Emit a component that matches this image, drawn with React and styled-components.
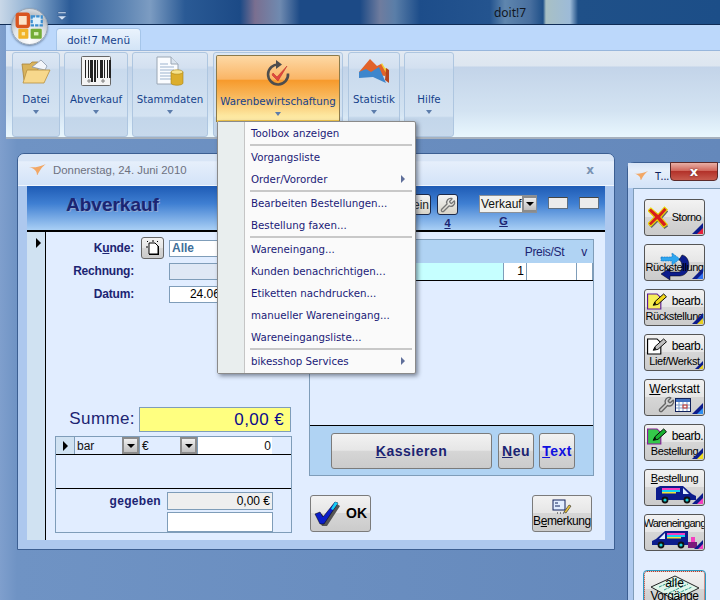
import React from "react";
import styled, { createGlobalStyle } from "styled-components";
import { Wrench } from "lucide-react";

const GlobalStyle = createGlobalStyle`
  html, body {
    margin: 0;
    padding: 0;
    background: #6488bb;
  }
  * {
    box-sizing: border-box;
  }
`;

const NAVY = "#1c2472";
const FIELD_BORDER = "#7f9db9";
const FACE = "linear-gradient(#f2f2f2 0%, #e6e6e6 48%, #d6d6d6 50%, #cbcbcb 100%)";

const Root = styled.div`
  width: 720px;
  height: 600px;
  overflow: hidden;
  display: flex;
  flex-direction: column;
  font-family: "Liberation Sans", Arial, sans-serif;
  background: linear-gradient(90deg, #7f9fcd 0, #6f93c4 17px, #6488bb 100%);
  position: relative;
`;

const TitleBar = styled.div`
  height: 25px;
  flex: none;
  display: flex;
  justify-content: center;
  align-items: center;
  padding-left: 300px;
  font-family: "Noto Sans", sans-serif;
  font-size: 12px;
  color: #10161f;
  border-bottom: 1px solid #0f2c55;
  background: linear-gradient(
    90deg,
    #c9d8e8 0,
    #8fb0d2 30px,
    #2c5c98 70px,
    #5f86b4 125px,
    #7c9cc2 150px,
    #2a5a95 185px,
    #1c4a86 240px,
    #7a6f90 255px,
    #6f8ab0 280px,
    #1c4a86 300px,
    #1c4a86 360px,
    #6f7c9e 380px,
    #5a7ea8 395px,
    #1d4d8a 420px,
    #24548f 490px,
    #5f86ae 505px,
    #486f9f 530px,
    #1f5088 543px,
    #a8c0c4 546px,
    #9dbbd8 570px,
    #1f5088 578px,
    #1c4e88 100%
  );
`;

const OfficeButton = styled.div`
  position: absolute;
  left: 11px;
  top: 8px;
  width: 37px;
  height: 37px;
  border-radius: 50%;
  border: 1px solid #9aa6b4;
  background: radial-gradient(circle at 50% 90%, #ffffff 0, #e2e6ea 45%, #b7bdc4 70%, #f3f5f7 100%);
  display: flex;
  align-items: center;
  justify-content: center;
  box-shadow: 0 1px 2px rgba(30, 50, 80, 0.5);
`;

const QuickArrow = styled.svg`
  position: absolute;
  left: 57px;
  top: 11px;
`;

const TabStrip = styled.div`
  height: 25px;
  flex: none;
  background: #bcd8fb;
  padding: 3px 0 0 50px;
  margin-left: 6px;
`;

const Tab = styled.div`
  width: 85px;
  height: 22px;
  border: 1px solid #a5c5e9;
  border-bottom: none;
  border-radius: 4px 4px 0 0;
  background: linear-gradient(#eaf3fd, #d3e4f6);
  display: flex;
  align-items: center;
  justify-content: center;
  font-family: "DejaVu Sans", sans-serif;
  font-size: 10.5px;
  color: #15428b;
`;

const RibbonPanel = styled.div`
  height: 89px;
  flex: none;
  margin-left: 6px;
  padding: 1px 0 0 6px;
  display: flex;
  border-top: 1px solid #98b6dc;
  border-bottom: 2px solid #a7b1bd;
  background: linear-gradient(
    #e2e9f2 0,
    #dde6f0 17%,
    #c3d4e9 19%,
    #d3e3f2 70%,
    #e9f7fe 100%
  );
`;

const RibbonGroup = styled.div`
  width: ${(p) => p.$w}px;
  height: 85px;
  flex: none;
  margin-right: ${(p) => p.$gap ?? 4}px;
  border: 1px solid #aec6e0;
  border-radius: 3px;
  padding-top: 2px;
  display: flex;
  flex-direction: column;
  align-items: center;
  background: linear-gradient(
    #dce7f4 0,
    #d3e0f0 18%,
    #c9daed 20%,
    #d4e3f2 76%,
    #c3d6ea 78%,
    #c7d9ec 100%
  );
`;

const HotButton = styled.div`
  width: 124px;
  height: 67px;
  border: 1px solid #8b7a4a;
  border-bottom: none;
  border-radius: 2px 2px 0 0;
  padding-top: 1px;
  display: flex;
  flex-direction: column;
  align-items: center;
  background: linear-gradient(#fdd9a5 0, #fab566 35%, #f79a2c 37%, #f8b95e 62%, #fde79f 90%, #fdeaa8 100%);
  box-shadow: inset 0 -2px 0 #f6c94c;
`;

const RibbonIcon = styled.div`
  height: 32px;
  flex: none;
  display: flex;
  align-items: center;
  justify-content: center;
`;

const RibbonLabel = styled.div`
  margin-top: 6px;
  font-family: "DejaVu Sans", sans-serif;
  font-size: 10.25px;
  line-height: 13px;
  color: #15428b;
  white-space: nowrap;
`;

const DownArrow = styled.div`
  margin-top: 4px;
  width: 0;
  height: 0;
  border-left: 3.5px solid transparent;
  border-right: 3.5px solid transparent;
  border-top: 4px solid #5b7cab;
`;

const Menu = styled.div`
  position: absolute;
  left: 217px;
  top: 121px;
  width: 199px;
  height: 253px;
  border: 1px solid #8a8a8a;
  border-radius: 2px;
  background: #fafafa;
  box-shadow: 2px 2px 4px rgba(40, 50, 70, 0.55);
  padding: 0 3px 1px 26px;
  display: flex;
  flex-direction: column;
  &::before {
    content: "";
    position: absolute;
    left: 0;
    top: 0;
    bottom: 0;
    width: 26px;
    background: #e9eeee;
    border-right: 1px solid #c5c5c5;
  }
`;

const MenuItem = styled.div`
  height: 22px;
  flex: none;
  display: flex;
  align-items: center;
  justify-content: space-between;
  padding: 0 7px 0 7px;
  font-family: "DejaVu Sans", sans-serif;
  font-size: 10.25px;
  color: #1a1a78;
  white-space: nowrap;
`;

const MenuRule = styled.div`
  height: 2px;
  flex: none;
  margin: 0 0 0 6px;
  background: #c8c8c8;
`;

const SubArrow = styled.span`
  width: 0;
  height: 0;
  border-top: 4px solid transparent;
  border-bottom: 4px solid transparent;
  border-left: 4px solid #5f6f9a;
`;

const Desktop = styled.div`
  flex: 1;
  display: flex;
  align-items: flex-start;
  padding: 14px 0 0 17px;
  min-height: 0;
`;

const Window = styled.div`
  width: 598px;
  height: 397px;
  flex: none;
  border: 1px solid #3c5f92;
  border-radius: 7px 7px 0 0;
  background: #adc8ee;
  display: flex;
  flex-direction: column;
  overflow: hidden;
`;

const WindowTitle = styled.div`
  height: 32px;
  flex: none;
  display: flex;
  align-items: center;
  padding: 0 20px 0 11px;
  gap: 6px;
  font-size: 11.4px;
  color: #6d7180;
  background: linear-gradient(#d8e5f6 0, #d8e5f6 22%, #e6effb 25%, #d3e3f8 100%);
  border-bottom: 1px solid #f0f6fd;
`;

const CloseX = styled.span`
  margin-left: auto;
  font-family: "DejaVu Sans", sans-serif;
  font-weight: 700;
  font-size: 12px;
  color: #7a93b2;
`;

const WindowBody = styled.div`
  flex: 1;
  margin: 0 9px 9px 9px;
  display: flex;
  flex-direction: column;
  min-height: 0;
  background: #e1edff;
`;

const FormHeader = styled.div`
  height: 46px;
  flex: none;
  display: flex;
  align-items: flex-start;
  border-bottom: 2px solid #000;
  background: linear-gradient(#1e5bb5 0, #3f7fd2 40%, #a9cff5 100%);
`;

const FormTitle = styled.div`
  margin: 9px 0 0 39px;
  font-size: 19px;
  line-height: 20px;
  font-weight: 700;
  color: ${NAVY};
  text-shadow: 1px 1px 0 #8ea8cf;
`;

const HeaderTools = styled.div`
  margin-left: auto;
  display: flex;
  align-items: flex-start;
  padding: 8px 6px 0 0;
`;

const HeaderStack = styled.div`
  display: flex;
  flex-direction: column;
  align-items: center;
  width: ${(p) => p.$w}px;
  margin-right: ${(p) => p.$gap ?? 0}px;
`;

const HeaderKey = styled.u`
  font-size: 11px;
  line-height: 13px;
  margin-top: 2px;
  margin-right: ${(p) => p.$shift ?? 0}px;
  font-weight: 700;
  color: ${NAVY};
`;

const MiniButton = styled.div`
  width: ${(p) => p.$w}px;
  height: 21px;
  border: 1px solid #1d2a4a;
  border-radius: 3px;
  background: linear-gradient(#f4f4f4, #d8d4c8);
  display: flex;
  align-items: center;
  justify-content: flex-end;
  padding-right: 1px;
  font-size: 12px;
  color: #222;
`;

const ToolFace = styled(MiniButton)`
  justify-content: center;
  padding: 0;
  color: #8a8a8a;
`;

const Combo = styled.div`
  width: 58px;
  height: 18px;
  margin-top: 1px;
  border: 1px solid #8b9097;
  background: #f1f1ee;
  display: flex;
  align-items: center;
  font-size: 12px;
  padding-left: 1px;
  color: #111;
  overflow: hidden;
`;

const DropButton = styled.span`
  width: 17px;
  height: 100%;
  flex: none;
  margin-left: auto;
  border: 2px solid #8b8b8b;
  background: linear-gradient(#eeeeee, #bfbfbf);
  display: flex;
  align-items: center;
  justify-content: center;
  &::after {
    content: "";
    border-left: 4px solid transparent;
    border-right: 4px solid transparent;
    border-top: 4px solid #000;
  }
`;

const SmallBox = styled.div`
  width: 20px;
  height: 12px;
  margin: 3px 0 0 11px;
  border: 1px solid #5f6f80;
  border-top-color: #444;
  background: #ececec;
`;

const FormBody = styled.div`
  flex: 1;
  display: flex;
  min-height: 0;
`;

const Selector = styled.div`
  width: 19px;
  flex: none;
  padding: 6px 0 0 9px;
  background: #d0e2f2;
  border-right: 1px solid #000;
`;

const Triangle = styled.div`
  width: 0;
  height: 0;
  border-top: ${(p) => p.$s ?? 5}px solid transparent;
  border-bottom: ${(p) => p.$s ?? 5}px solid transparent;
  border-left: ${(p) => p.$s ?? 5}px solid #000;
`;

const LeftColumn = styled.div`
  width: 263px;
  flex: none;
  display: flex;
  flex-direction: column;
  padding-top: 5px;
`;

const FormRow = styled.div`
  display: flex;
  align-items: center;
  height: ${(p) => p.$h}px;
  margin-bottom: ${(p) => p.$mb ?? 0}px;
`;

const FormLabel = styled.div`
  width: 88px;
  flex: none;
  text-align: right;
  font-size: 12px;
  font-weight: 700;
  letter-spacing: -0.2px;
  color: ${NAVY};
`;

const Field = styled.div`
  width: ${(p) => p.$w}px;
  height: ${(p) => p.$h ?? 17}px;
  flex: none;
  margin-left: ${(p) => p.$ml ?? 0}px;
  border: 1px solid ${FIELD_BORDER};
  background: ${(p) => p.$bg ?? "#fff"};
  color: ${(p) => p.$color ?? "#000"};
  font-size: 12px;
  font-weight: ${(p) => (p.$bold ? 700 : 400)};
  line-height: ${(p) => (p.$h ?? 17) - 2}px;
  padding: 0 2px;
  text-align: ${(p) => p.$align ?? "left"};
  overflow: hidden;
  white-space: nowrap;
`;

const IconSquare = styled.div`
  width: 23px;
  height: 22px;
  margin-left: 7px;
  flex: none;
  border: 1px solid #666;
  border-radius: 3px;
  background: ${FACE};
  display: flex;
  align-items: center;
  justify-content: center;
`;

const SumRow = styled.div`
  margin-top: auto;
  display: flex;
  align-items: center;
  justify-content: flex-end;
  height: 26px;
  flex: none;
  padding-right: 18px;
`;

const SumLabel = styled.div`
  font-size: 17px;
  letter-spacing: 0.4px;
  color: ${NAVY};
  margin-right: 4px;
`;

const SumField = styled.div`
  width: 152px;
  height: 25px;
  border: 1px solid ${FIELD_BORDER};
  background: #ffff80;
  color: #0a0a8c;
  font-size: 17px;
  line-height: 23px;
  letter-spacing: 0.4px;
  text-align: right;
  padding-right: 6px;
`;

const PayBox = styled.div`
  width: 237px;
  height: 97px;
  flex: none;
  margin: 4px 0 7px 9px;
  border: 1px solid ${FIELD_BORDER};
  display: flex;
  flex-direction: column;
`;

const PayRow = styled.div`
  height: 17px;
  flex: none;
  display: flex;
  align-items: stretch;
  border-bottom: 1px solid #000;
  box-sizing: content-box;
  font-size: 11px;
`;

const PayMark = styled.div`
  width: 18px;
  background: #d0e2f2;
  display: flex;
  align-items: center;
  justify-content: center;
`;

const PayCell = styled.div`
  width: ${(p) => p.$w}px;
  display: flex;
  align-items: center;
  padding-left: 2px;
  border-left: 1px solid ${FIELD_BORDER};
  color: #111;
  background: ${(p) => p.$bg ?? "transparent"};
  justify-content: ${(p) => (p.$right ? "flex-end" : "flex-start")};
  padding-right: ${(p) => (p.$right ? 1 : 0)}px;
  font-size: 12px;
`;

const PaySpacer = styled.div`
  height: 33px;
  flex: none;
  border-bottom: 1px solid #000;
  box-sizing: content-box;
`;

const GivenGrid = styled.div`
  display: grid;
  grid-template-columns: 105px 106px;
  column-gap: 6px;
  row-gap: 2px;
  padding-top: 3px;
  align-items: center;
`;

const GivenLabel = styled.div`
  text-align: right;
  font-size: 12px;
  font-weight: 700;
  letter-spacing: 0.3px;
  color: ${NAVY};
`;

const RightColumn = styled.div`
  flex: 1;
  display: flex;
  flex-direction: column;
  padding: 7px 12px 7px 0;
`;

const SalesPanel = styled.div`
  height: 237px;
  flex: none;
  width: 285px;
  border: 1px solid ${FIELD_BORDER};
  display: flex;
  flex-direction: column;
`;

const GridHead = styled.div`
  height: 23px;
  flex: none;
  display: flex;
  align-items: center;
  justify-content: flex-end;
  padding-right: 6px;
  gap: 17px;
  background: #b0d3f3;
  font-size: 12px;
  letter-spacing: -0.3px;
  color: ${NAVY};
`;

const GridRow = styled.div`
  height: 17px;
  flex: none;
  display: flex;
  border-bottom: 1px solid #000;
  box-sizing: content-box;
`;

const GridCell = styled.div`
  width: ${(p) => p.$w}px;
  flex: ${(p) => (p.$w ? "none" : 1)};
  background: ${(p) => p.$bg ?? "#fff"};
  border-right: 1px solid ${FIELD_BORDER};
  font-size: 12px;
  text-align: right;
  padding-right: 2px;
  line-height: 16px;
`;

const GridFill = styled.div`
  flex: 1;
  border-bottom: 1px solid #000;
`;

const ActionBar = styled.div`
  height: 49px;
  flex: none;
  display: flex;
  align-items: center;
  padding-left: 21px;
  background: #b0d3f3;
`;

const ActionButton = styled.div`
  width: ${(p) => p.$w}px;
  height: 36px;
  margin-right: ${(p) => p.$gap ?? 0}px;
  border: 1px solid #7b7b7b;
  border-radius: 3px;
  background: ${FACE};
  display: flex;
  align-items: center;
  justify-content: center;
  font-size: 14px;
  font-weight: 700;
  letter-spacing: 0.5px;
  color: ${(p) => p.$color ?? NAVY};
`;

const BottomRow = styled.div`
  display: flex;
  justify-content: space-between;
  padding: 19px 2px 0 1px;
  width: 285px;
`;

const BigButton = styled.div`
  width: ${(p) => p.$w}px;
  height: 37px;
  border: 1px solid #7b7b7b;
  border-radius: 3px;
  background: ${FACE};
  display: flex;
  flex-direction: ${(p) => (p.$col ? "column" : "row")};
  align-items: center;
  justify-content: center;
  gap: ${(p) => (p.$col ? 0 : 5)}px;
  font-size: ${(p) => (p.$col ? 12 : 14)}px;
  font-weight: ${(p) => (p.$col ? 400 : 700)};
  letter-spacing: ${(p) => (p.$col ? -0.4 : 0)}px;
  line-height: 13px;
  color: #000;
`;

const ToolWindow = styled.div`
  width: 100px;
  height: 450px;
  flex: none;
  margin: 9px 0 0 12px;
  border: 1px solid #3c5f92;
  border-radius: 7px 0 0 0;
  background: #adc8ee;
  display: flex;
  flex-direction: column;
  position: relative;
`;

const ToolTitle = styled.div`
  height: 25px;
  flex: none;
  display: flex;
  align-items: center;
  gap: 6px;
  padding-left: 6px;
  font-family: "Noto Sans", sans-serif;
  font-size: 11px;
  color: #10205a;
  background: linear-gradient(#d8e5f6, #e6effb 30%, #d3e3f8);
`;

const RedClose = styled.div`
  position: absolute;
  left: 42px;
  top: -1px;
  width: 48px;
  height: 19px;
  border: 1px solid #5a2a2a;
  border-radius: 0 0 4px 4px;
  background: linear-gradient(#e8b0a6 0, #d0675c 45%, #b3322a 50%, #c75b4e 100%);
  display: flex;
  align-items: center;
  justify-content: center;
  color: #fff;
  font-family: "DejaVu Sans", sans-serif;
  font-size: 13px;
  font-weight: 700;
  text-shadow: 0 0 2px #5a2a2a;
`;

const ToolPanel = styled.div`
  flex: 1;
  margin-left: 5px;
  background: #e1edff;
  border: 1px solid #7f9db9;
  padding: 10px 0 0 10px;
  display: flex;
  flex-direction: column;
  gap: 8px;
`;

const ToolButton = styled.div`
  width: 61px;
  height: 37px;
  flex: none;
  position: relative;
  border: 1px ${(p) => (p.$focus ? "dotted #c0392b" : "solid #555")};
  outline: ${(p) => (p.$focus ? "1px solid #2f9ac0" : "none")};
  border-radius: 3px;
  background: ${FACE};
  margin-top: ${(p) => p.$top ?? 0}px;
  padding-top: ${(p) => p.$padTop ?? 0}px;
  display: flex;
  flex-direction: ${(p) => (p.$row ? "row" : "column")};
  flex-wrap: ${(p) => (p.$row ? "wrap" : "nowrap")};
  align-items: center;
  align-content: center;
  justify-content: ${(p) => (p.$padTop ? "flex-start" : "center")};
  line-height: 13px;
  color: #000;
  white-space: nowrap;
  overflow: hidden;
`;

const ToolLabel = styled.span`
  position: relative;
  flex-basis: ${(p) => (p.$full ? "100%" : "auto")};
  text-align: center;
  font-size: ${(p) => p.$fs ?? 11}px;
  margin-top: ${(p) => p.$mt ?? 0}px;
  margin-left: ${(p) => p.$ml ?? 0}px;
  letter-spacing: ${(p) => p.$ls ?? -0.4}px;
`;

const Corner = styled.svg`
  position: absolute;
  right: 1px;
  bottom: 1px;
`;

const ToolBackdrop = styled.svg`
  position: absolute;
  left: 5px;
  top: 3px;
`;

const FolderIcon = () => (
  <svg width="30" height="26" viewBox="0 0 30 26">
    <path d="M1 6h8l2-2h6v18H3z" fill="#d9b35c" stroke="#a8833a" strokeWidth=".8" />
    <path d="M11 9L20 2l6 6-2 4z" fill="#f4f6fa" stroke="#8a97a8" strokeWidth=".8" />
    <path d="M6 12h23l-6 13H2z" fill="#f7d88c" stroke="#b88f3e" strokeWidth=".8" />
  </svg>
);

const BARS = [1, 2, 1, 1, 3, 1, 2, 1, 1, 2, 3, 1, 1, 2, 1, 1, 2, 1, 1];
const BarcodeIcon = () => {
  let x = 4;
  const rects = BARS.map((w, i) => {
    const bar = i % 2 === 0 ? <rect key={i} x={x} y="4" width={w} height={i > 3 && i < 8 ? 22 : 18} fill="#222" /> : null;
    x += w;
    return bar;
  });
  return (
    <svg width="30" height="30" viewBox="0 0 30 30">
      <rect x=".5" y=".5" width="29" height="29" rx="1" fill="#f4f4f4" stroke="#666" />
      {rects}
      <rect x="4" y="22" width="6" height="5" fill="#f4f4f4" />
      <rect x="18" y="22" width="8" height="5" fill="#f4f4f4" />
      <circle cx="8" cy="25" r="1.2" fill="none" stroke="#444" strokeWidth=".7" />
      <circle cx="22" cy="25" r="1.2" fill="none" stroke="#444" strokeWidth=".7" />
    </svg>
  );
};

const DocDbIcon = () => (
  <svg width="28" height="30" viewBox="0 0 28 30">
    <path d="M1 1h14l7 7v20H1z" fill="#fafcff" stroke="#9aa6b4" />
    <path d="M15 1v7h7" fill="#dbe5f0" stroke="#9aa6b4" />
    <g stroke="#9db3ce" strokeWidth="1">
      <path d="M4 8h8M4 11h14M4 14h14M4 17h12M4 20h12M4 23h12" />
    </g>
    <path d="M15 16v11c0 3 12 3 12 0V16z" fill="#dcae2c" stroke="#a98516" strokeWidth=".6" />
    <ellipse cx="21" cy="16" rx="6" ry="2.2" fill="#f7e28a" stroke="#a98516" strokeWidth=".6" />
  </svg>
);

const RefreshCheckIcon = () => (
  <svg width="26" height="28" viewBox="0 0 26 28">
    <path d="M14 5.5a10 10 0 1 0 9 9" fill="none" stroke="#4d4d4d" strokeWidth="2.6" />
    <path d="M11 1l6 4.5-6 4.5z" fill="#4d4d4d" />
    <path d="M8 14l4 4 10-11-9 15-6-6z" fill="#e0473f" stroke="#b92a25" strokeWidth=".5" />
  </svg>
);

const ChartIcon = () => (
  <svg width="32" height="28" viewBox="0 0 32 28">
    <path d="M21 10l3-4 3 5 3 1-1 9z" fill="#f2d23a" />
    <path d="M1 15l11-13 7 7 4-2 5 9-1 3z" fill="#e2622a" />
    <path d="M28 11l3 2v13l-4-3z" fill="#b5451f" />
    <path d="M1 15l7-3 5 3 8-5 7 16-13-6-14 1z" fill="#3e86cc" />
  </svg>
);

const OfficeLogo = () => (
  <svg width="29" height="29" viewBox="0 0 26 26">
    <rect x="2" y="2" width="10" height="11" rx="1.5" fill="#fbe3c8" stroke="#d9541e" strokeWidth="3" />
    <rect x="15" y="4" width="9" height="8" fill="#dff0fb" stroke="#3d8fd0" strokeWidth="2" strokeDasharray="3 1" />
    <rect x="3" y="15" width="9" height="9" rx="1" fill="#f2b328" />
    <rect x="14" y="15" width="10" height="9" rx="1" fill="#74ad37" />
    <rect x="6" y="18" width="3" height="3" fill="#fbe7a8" />
    <rect x="17" y="18" width="4" height="3" fill="#d8efb8" />
  </svg>
);

const Swoosh = ({ size = 18 }) => (
  <svg width={size} height={size * 0.66} viewBox="0 0 18 12">
    <path d="M0 3c5 1 10 0 17-3-4 3-6 6-9 12 0-4-1-7-8-9z" fill="#f2a765" />
  </svg>
);

const NoteIcon = () => (
  <svg width="14" height="16" viewBox="0 0 14 16">
    <path d="M3 3h6l3 3v8H3z" fill="#fff" stroke="#000" />
    <path d="M3 14h9v1H3zM12 6h1v9h-1z" fill="#000" />
    <path d="M1 1l1 1M7 0v2M12 1l-1 1M0 7h2" stroke="#000" />
  </svg>
);

const CheckIcon = () => (
  <svg width="27" height="26" viewBox="0 0 27 26">
    <path d="M3 15l5-2 3 5L23 3l3 2-13 20-5 0z" fill="#555" />
    <path d="M1 13l5-2 3 5L21 1l3 1L10 23H6z" fill="#0b1ec8" stroke="#000" strokeWidth=".5" />
    <path d="M21 1l3 1-5 7-2-1z" fill="#18d0f5" />
  </svg>
);

const NotePenIcon = () => (
  <svg width="20" height="16" viewBox="0 0 20 16">
    <rect x="1" y="1" width="12" height="10" fill="#e1edff" stroke="#10205a" />
    <path d="M3 4h3M3 7h5" stroke="#10205a" />
    <path d="M12 13l5-7 2 1-5 7z" fill="#e8c23a" stroke="#222" strokeWidth=".6" />
    <path d="M5 14h1M8 14h1M11 14h1" stroke="#222" />
  </svg>
);

const XIcon = () => (
  <svg width="22" height="26" viewBox="0 0 24 26">
    <path d="M5 5l7 6 7-8 3 3-7 8 7 8-4 3-7-8-7 7-3-3 7-7-6-7z" fill="#666" />
    <path d="M3 2l8 7 7-8 3 3-7 8 7 8-4 3-7-8-7 7-3-3 7-7-7-7z" fill="#d81e1e" stroke="#e8d800" strokeWidth="1.2" />
  </svg>
);

const ReturnArrowsIcon = () => (
  <svg width="34" height="31" viewBox="0 0 34 31">
    <path d="M3 5h11V1l8 6-8 6V9H3z" fill="#2fa6ef" stroke="#0b6ec0" strokeWidth=".6" strokeDasharray="2 .6" />
    <path d="M24 3c9 1 10 20-2 21H12v4l-9-6 9-6v4h9c4 0 4-11 0-12z" fill="#0c1c8c" stroke="#000" strokeWidth=".5" />
  </svg>
);

const EditIcon = ({ color, pen, frame = "#000" }) => (
  <svg width="23" height="17" viewBox="0 0 23 18">
    <path d="M1 1h10l4 4v12H1z" fill={color} stroke={frame} strokeWidth="1.2" />
    <path d="M7 13l2-4 9-8 3 3-9 8z" fill={pen} stroke="#000" />
    <path d="M7 13l3-1-1-3z" fill="#000" />
  </svg>
);

const CalendarIcon = () => (
  <svg width="16" height="15" viewBox="0 0 16 15">
    <rect x=".5" y="1.5" width="15" height="13" fill="#fff" stroke="#10205a" />
    <rect x="1" y="2" width="14" height="3" fill="#3f6fc0" />
    <path d="M4 5v9M8 5v9M12 5v9M1 8h14M1 11h14" stroke="#7f9dc9" />
    <rect x="8" y="8" width="4" height="3" fill="none" stroke="#d63a2a" />
  </svg>
);

const TruckIcon = () => (
  <svg width="42" height="19" viewBox="0 0 42 19">
    <path d="M6 1h23l9 8 4 2v4H2V3z" fill="#0c1c8c" />
    <path d="M29 3l6 6h-6z" fill="#e1edff" />
    <rect x="8" y="3" width="18" height="2" fill="#f43fc0" />
    <rect x="8" y="5" width="18" height="2" fill="#18d0f5" />
    <rect x="8" y="7" width="14" height="1.5" fill="#f2e23a" />
    <circle cx="11" cy="15" r="3.4" fill="#111" />
    <circle cx="11" cy="15" r="1.6" fill="#18d0d5" />
    <circle cx="33" cy="15" r="3.4" fill="#111" />
    <circle cx="33" cy="15" r="1.6" fill="#18d0d5" />
  </svg>
);

const InboundTruckIcon = () => (
  <svg width="46" height="19" viewBox="0 0 46 19">
    <path d="M36 1H13L4 9l-4 2v4h36z" fill="#0c1c8c" />
    <path d="M13 3L7 9h6z" fill="#e1edff" />
    <rect x="15" y="3" width="18" height="2" fill="#f43fc0" />
    <rect x="15" y="5" width="18" height="2" fill="#18d0f5" />
    <rect x="15" y="7" width="14" height="1.5" fill="#f2e23a" />
    <circle cx="9" cy="15" r="3.4" fill="#111" />
    <circle cx="9" cy="15" r="1.6" fill="#18d0d5" />
    <circle cx="29" cy="15" r="3.4" fill="#111" />
    <circle cx="29" cy="15" r="1.6" fill="#18d0d5" />
    <rect x="36" y="12" width="9" height="6" fill="#7a1a7a" />
    <rect x="39" y="7" width="4" height="5" fill="#f43fc0" />
  </svg>
);

const Tri = ({ a, b = "#0c1c8c", size = 11 }) => (
  <Corner width={size} height={size} viewBox="0 0 11 11">
    <path d="M11 0v11H0z" fill={b} />
    <path d="M11 5v6H5z" fill={a} />
  </Corner>
);

const RIBBON = [
  { label: "Datei", w: 48, icon: <FolderIcon /> },
  { label: "Abverkauf", w: 64, icon: <BarcodeIcon /> },
  { label: "Stammdaten", w: 76, icon: <DocDbIcon />, gap: 5 },
];

const MENU = [
  ["Toolbox anzeigen"],
  "rule",
  ["Vorgangsliste"],
  ["Order/Vororder", true],
  "rule",
  ["Bearbeiten Bestellungen..."],
  ["Bestellung faxen..."],
  "rule",
  ["Wareneingang..."],
  ["Kunden benachrichtigen..."],
  ["Etiketten nachdrucken..."],
  ["manueller Wareneingang..."],
  ["Wareneingangsliste..."],
  "rule",
  ["bikesshop Services", true],
];

export default function App() {
  return (
    <Root>
      <GlobalStyle />
      <TitleBar>doit!7</TitleBar>
      <TabStrip>
        <Tab>doit!7 Menü</Tab>
      </TabStrip>
      <RibbonPanel>
        {RIBBON.map((g) => (
          <RibbonGroup key={g.label} $w={g.w} $gap={g.gap}>
            <RibbonIcon>{g.icon}</RibbonIcon>
            <RibbonLabel>{g.label}</RibbonLabel>
            <DownArrow />
          </RibbonGroup>
        ))}
        <RibbonGroup $w={130} $gap={5}>
          <HotButton>
            <RibbonIcon>
              <RefreshCheckIcon />
            </RibbonIcon>
            <RibbonLabel>Warenbewirtschaftung</RibbonLabel>
            <DownArrow />
          </HotButton>
        </RibbonGroup>
        <RibbonGroup $w={52}>
          <RibbonIcon>
            <ChartIcon />
          </RibbonIcon>
          <RibbonLabel>Statistik</RibbonLabel>
          <DownArrow />
        </RibbonGroup>
        <RibbonGroup $w={50}>
          <RibbonIcon />
          <RibbonLabel>Hilfe</RibbonLabel>
          <DownArrow />
        </RibbonGroup>
      </RibbonPanel>

      <Desktop>
        <Window>
          <WindowTitle>
            <Swoosh />
            Donnerstag, 24. Juni 2010
            <CloseX>x</CloseX>
          </WindowTitle>
          <WindowBody>
            <FormHeader>
              <FormTitle>Abverkauf</FormTitle>
              <HeaderTools>
                <HeaderStack $w={30} $gap={6}>
                  <MiniButton $w={30}>ein</MiniButton>
                </HeaderStack>
                <HeaderStack $w={21} $gap={21}>
                  <ToolFace $w={21}>
                    <Wrench size={16} color="#777" />
                  </ToolFace>
                  <HeaderKey>4</HeaderKey>
                </HeaderStack>
                <HeaderStack $w={58}>
                  <Combo>
                    Verkauf
                    <DropButton />
                  </Combo>
                  <HeaderKey $shift={9}>G</HeaderKey>
                </HeaderStack>
                <SmallBox />
                <SmallBox />
              </HeaderTools>
            </FormHeader>
            <FormBody>
              <Selector>
                <Triangle />
              </Selector>
              <LeftColumn>
                <FormRow $h={22} $mb={3}>
                  <FormLabel>
                    K<u>u</u>nde:
                  </FormLabel>
                  <IconSquare>
                    <NoteIcon />
                  </IconSquare>
                  <Field $w={84} $ml={5} $color="#3f6f9a" $bold>
                    Alle
                  </Field>
                </FormRow>
                <FormRow $h={18} $mb={5}>
                  <FormLabel>Rechnung:</FormLabel>
                  <Field $w={84} $ml={35} $bg="#dfe8f5" />
                </FormRow>
                <FormRow $h={18}>
                  <FormLabel>Datum:</FormLabel>
                  <Field $w={84} $ml={35} $align="right">
                    24.06.2010
                  </Field>
                </FormRow>
                <SumRow>
                  <SumLabel>Summe:</SumLabel>
                  <SumField>0,00 €</SumField>
                </SumRow>
                <PayBox>
                  <PayRow>
                    <PayMark>
                      <Triangle $s={5} />
                    </PayMark>
                    <PayCell $w={65}>
                      bar
                      <DropButton />
                    </PayCell>
                    <PayCell $w={58}>
                      €
                      <DropButton />
                    </PayCell>
                    <PayCell $w={75} $right $bg="#fff">
                      0
                    </PayCell>
                  </PayRow>
                  <PaySpacer />
                  <GivenGrid>
                    <GivenLabel>gegeben</GivenLabel>
                    <Field $w={106} $h={18} $bg="#efefef" $align="right">
                      0,00 €
                    </Field>
                    <span />
                    <Field $w={106} $h={20} />
                  </GivenGrid>
                </PayBox>
              </LeftColumn>
              <RightColumn>
                <SalesPanel>
                  <GridHead>
                    <span>Preis/St</span>
                    <span>v</span>
                  </GridHead>
                  <GridRow>
                    <GridCell $bg="#c6ffff" />
                    <GridCell $w={23}>1</GridCell>
                    <GridCell $w={50} />
                    <GridCell $w={16} />
                  </GridRow>
                  <GridFill />
                  <ActionBar>
                    <ActionButton $w={161} $gap={6}>
                      <span>
                        <u>K</u>assieren
                      </span>
                    </ActionButton>
                    <ActionButton $w={36} $gap={5}>
                      <span>
                        <u>N</u>eu
                      </span>
                    </ActionButton>
                    <ActionButton $w={36} $color="#1010e0">
                      <span>
                        <u>T</u>ext
                      </span>
                    </ActionButton>
                  </ActionBar>
                </SalesPanel>
                <BottomRow>
                  <BigButton $w={61}>
                    <CheckIcon />
                    OK
                  </BigButton>
                  <BigButton $w={60} $col>
                    <NotePenIcon />
                    <span>
                      B<u>e</u>merkung
                    </span>
                  </BigButton>
                </BottomRow>
              </RightColumn>
            </FormBody>
          </WindowBody>
        </Window>

        <ToolWindow>
          <ToolTitle>
            <Swoosh size={15} />
            T...
          </ToolTitle>
          <RedClose>x</RedClose>
          <ToolPanel>
            <ToolButton $row>
              <XIcon />
              <ToolLabel $ml={2} $ls={-0.5}>Storno</ToolLabel>
              <Tri a="#e8203a" />
            </ToolButton>
            <ToolButton>
              <ReturnArrowsIcon />
              <ToolLabel $mt={-22}>Rückstellung</ToolLabel>
              <Tri a="#2f6ff0" />
            </ToolButton>
            <ToolButton $row>
              <EditIcon color="#f6ee5a" pen="#f2d81a" frame="#5a1a9a" />
              <ToolLabel $ml={3} $fs={12}>bearb.</ToolLabel>
              <ToolLabel $full>Rückstellung</ToolLabel>
              <Tri a="#e8d020" />
            </ToolButton>
            <ToolButton $row>
              <EditIcon color="#fff" pen="#c0c0c0" />
              <ToolLabel $ml={3} $fs={12}>bearb.</ToolLabel>
              <ToolLabel $full>Lief/Werkst</ToolLabel>
              <Tri a="#e8d020" size={8} />
            </ToolButton>
            <ToolButton $row>
              <ToolLabel $full $fs={12} $ls={0}>
                <u>W</u>erkstatt
              </ToolLabel>
              <Wrench size={17} color="#666" />
              <CalendarIcon />
              <Tri a="#2f8ff0" />
            </ToolButton>
            <ToolButton $row>
              <EditIcon color="#35c84a" pen="#18b030" frame="#8a1a9a" />
              <ToolLabel $ml={3} $fs={12}>bearb.</ToolLabel>
              <ToolLabel $full>Bestellung</ToolLabel>
              <Tri a="#f0e020" />
            </ToolButton>
            <ToolButton>
              <ToolLabel>
                <u>B</u>estellung
              </ToolLabel>
              <TruckIcon />
              <Tri a="#f43fc0" />
            </ToolButton>
            <ToolButton>
              <ToolLabel $ls={-0.75}>Wareneingang</ToolLabel>
              <InboundTruckIcon />
              <Tri a="#f43fc0" size={9} />
            </ToolButton>
            <ToolButton $focus $top={12} $padTop={5}>
              <ToolBackdrop width="50" height="26" viewBox="0 0 50 26">
                <path d="M1 12L25 1l24 12-24 12z" fill="#dff5ea" stroke="#222" />
                <path d="M9 12L27 4M14 15L33 6M19 18L38 9M24 20L42 12" stroke="#2f9a8a" strokeDasharray="3 1" />
              </ToolBackdrop>
              <ToolLabel $fs={12} $ls={0}>alle</ToolLabel>
              <ToolLabel $fs={12}>Vorgänge</ToolLabel>
            </ToolButton>
          </ToolPanel>
        </ToolWindow>
      </Desktop>

      <OfficeButton>
        <OfficeLogo />
      </OfficeButton>
      <QuickArrow width="10" height="10" viewBox="0 0 10 10">
        <path d="M1 1h8v1.5H1zM0.5 5h9L5 9z" fill="#cfe0f5" stroke="#274a7c" strokeWidth=".4" />
      </QuickArrow>
      <Menu>
        {MENU.map((m, i) =>
          m === "rule" ? (
            <MenuRule key={i} />
          ) : (
            <MenuItem key={m[0]}>
              {m[0]}
              {m[1] && <SubArrow />}
            </MenuItem>
          )
        )}
      </Menu>
    </Root>
  );
}
